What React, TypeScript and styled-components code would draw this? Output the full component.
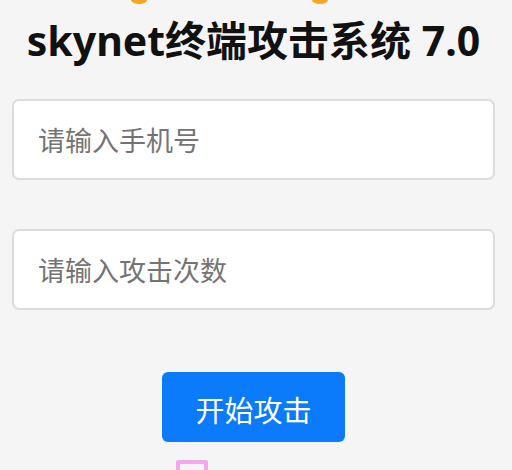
import React from "react";
import styled, { createGlobalStyle } from "styled-components";

const Global = createGlobalStyle`
  html, body { margin: 0; padding: 0; background: #f5f5f5; }
  body { font-family: "Noto Sans", "Noto Sans CJK SC", sans-serif; }
`;

const Page = styled.div`
  width: 512px;
  height: 470px;
  overflow: hidden;
  display: flex;
  flex-direction: column;
  background: #f5f5f5;
`;

const Decor = styled.svg`
  display: block;
  flex: none;
`;

const Title = styled.h1`
  margin: 9px 0 0;
  padding-right: 5px;
  height: 50px;
  line-height: 50px;
  text-align: center;
  font-size: 41px;
  font-weight: 700;
  color: #111;
  font-family: "Noto Sans", "Noto Sans CJK SC", sans-serif;
  white-space: nowrap;
`;

const Form = styled.div`
  display: flex;
  flex-direction: column;
  padding: 0 17px 0 12px;
  margin-top: 34px;
  gap: 49px;
`;

const Field = styled.input`
  box-sizing: border-box;
  height: 81px;
  width: 100%;
  border: 2px solid #dcdcdc;
  border-radius: 7px;
  background: #fff;
  padding: 0 0 0 24px;
  font-size: 27px;
  font-family: "Noto Sans CJK SC", sans-serif;
  color: #222;
  outline: none;
  &::placeholder { color: #747474; }
`;

const Actions = styled.div`
  display: flex;
  flex-direction: column;
  align-items: flex-start;
  padding-left: 162px;
  margin-top: 62px;
`;

const Button = styled.button`
  width: 183px;
  height: 70px;
  border: none;
  border-radius: 6px;
  background: #0b7bfb;
  color: #fff;
  font-size: 29px;
  font-family: "Noto Sans CJK SC", sans-serif;
  padding: 4px 0 0;
  cursor: pointer;
`;

const PinkBox = styled.div`
  margin: 18px 0 0 14px;
  width: 32px;
  height: 30px;
  box-sizing: border-box;
  border: 4px solid #f6a6ee;
  border-radius: 2px;
`;

export default function App() {
  return (
    <Page>
      <Global />
      <Decor width="512" height="6" viewBox="0 0 512 6">
        <ellipse cx="139" cy="0" rx="8" ry="4" fill="#f6a623" />
        <ellipse cx="320" cy="0" rx="8" ry="4" fill="#f6a623" />
      </Decor>
      <Title>skynet终端攻击系统 7.0</Title>
      <Form>
        <Field placeholder="请输入手机号" />
        <Field placeholder="请输入攻击次数" />
      </Form>
      <Actions>
        <Button>开始攻击</Button>
        <PinkBox />
      </Actions>
    </Page>
  );
}
